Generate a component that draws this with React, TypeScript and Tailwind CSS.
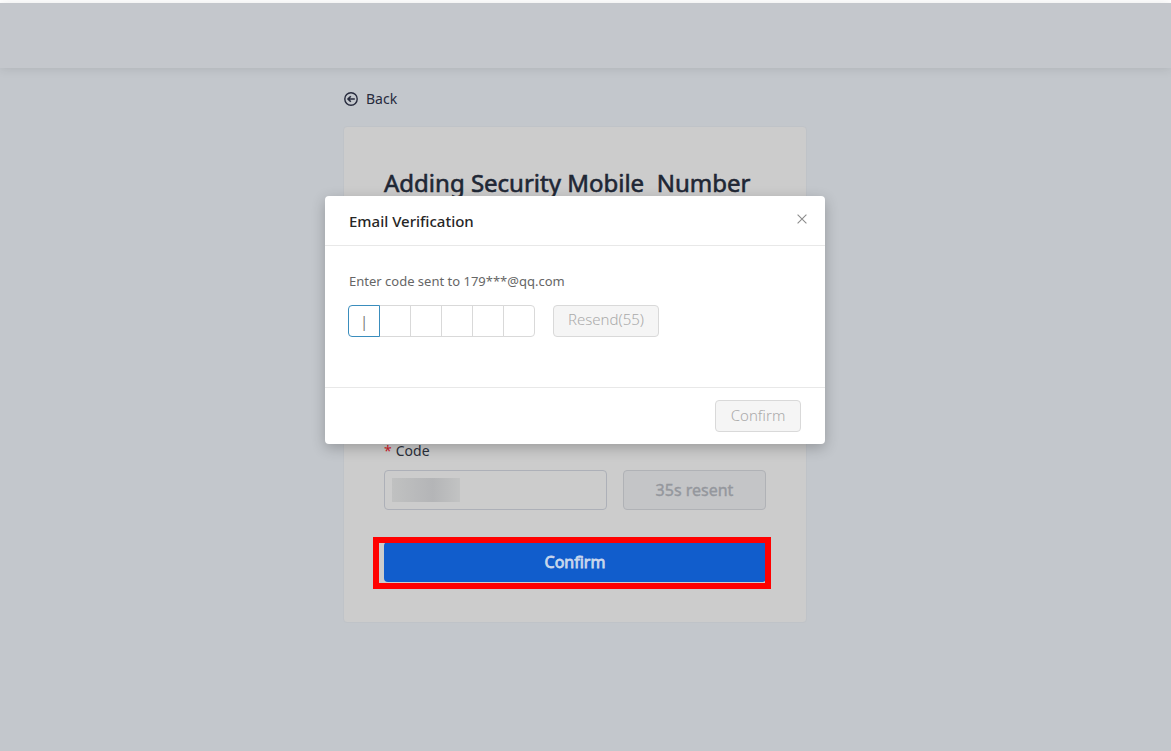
import React from "react";

const CELLS = ["1", "2", "3", "4", "5", "6"];

function BackIcon() {
  return (
    <svg width="14" height="14" viewBox="0 0 14 14" fill="none" stroke="currentColor" aria-hidden="true">
      <circle cx="7" cy="7" r="6.2" strokeWidth="1.4" />
      <path d="M10.8 7H4M6.8 4.2 4 7l2.8 2.8" strokeWidth="1.6" />
    </svg>
  );
}

function CloseIcon() {
  return (
    <svg width="10" height="10" viewBox="0 0 10 10" fill="none" stroke="currentColor" aria-hidden="true">
      <path d="M0.6 0.6l8.8 8.8M9.4 0.6L0.6 9.4" strokeWidth="1.1" />
    </svg>
  );
}

function SecurityCard() {
  return (
    <section className="rounded border border-[#bfc3c8] bg-[#cccccc] p-10">
      <h1 className="text-2xl leading-8 font-normal whitespace-pre text-[#1f2735] [-webkit-text-stroke:0.6px_currentColor]">
        Adding Security Mobile  Number
      </h1>
      <form className="pt-[242px]" onSubmit={(e) => e.preventDefault()}>
        <label htmlFor="sms-code" className="flex h-5 gap-1 text-sm leading-5 text-[#2b303b]">
          <span className="text-[#d32029]">*</span>
          Code
        </label>
        <div className="mt-[9px] flex gap-4">
          <div className="relative min-w-0 flex-1">
            <input
              id="sms-code"
              type="text"
              className="block h-10 w-full rounded border border-[#adb0b8] bg-transparent px-2 outline-none"
            />
            <div className="pointer-events-none absolute top-2 left-2 h-6 w-[68px] bg-linear-to-r from-[#c0c1c1] via-[#b4b5b7] via-60% to-[#c2c3c3]" />
          </div>
          <button
            type="button"
            disabled
            className="h-10 w-[143px] rounded border border-[#b0b2b6] bg-[#c4c5c7] text-base font-normal text-[#94979d] [-webkit-text-stroke:0.4px_currentColor]"
          >
            35s resent
          </button>
        </div>
        <div className="relative mt-8">
          <button
            type="submit"
            className="block h-10 w-full rounded bg-[#115dcc] text-base font-normal text-[#c9d7ec] [-webkit-text-stroke:0.8px_currentColor]"
          >
            Confirm
          </button>
          <div className="pointer-events-none absolute -top-[5px] -right-[5px] -bottom-[7px] -left-[11px] border-6 border-[#ff0000]" />
        </div>
      </form>
    </section>
  );
}

function VerificationDialog() {
  return (
    <div
      role="dialog"
      aria-labelledby="dialog-title"
      className="w-[500px] rounded-[4px] bg-white font-['Noto_Sans',sans-serif] shadow-[0_4px_14px_rgba(0,0,0,0.24)]"
    >
      <header className="flex h-[50px] items-center justify-between border-b border-[#e8e8e8] pr-[18px] pl-6">
        <h2 id="dialog-title" className="text-[15px] leading-6 font-medium text-[#262626]">
          Email Verification
        </h2>
        <button type="button" aria-label="Close" className="flex h-6 w-[10px] items-center justify-center pb-1 text-[#8c8c8c]">
          <CloseIcon />
        </button>
      </header>
      <div className="h-[141px] pt-[23px] pr-6 pl-[23px]">
        <p className="px-px font-['Noto_Sans',sans-serif] text-[13px] leading-6 font-normal text-[#666666]">
          Enter code sent to 179***@qq.com
        </p>
        <div className="mt-3 flex items-center gap-[18px]">
          <div className="flex -space-x-px">
            {CELLS.map((n, i) => (
              <input
                key={n}
                type="text"
                maxLength={1}
                aria-label={`Digit ${n}`}
                placeholder={i === 0 ? "|" : undefined}
                className="h-8 w-8 border border-[#d9d9d9] bg-white text-center text-sm outline-none placeholder:text-[#777777] first:relative first:rounded-l first:border-[#3a8dbd] last:rounded-r"
              />
            ))}
          </div>
          <button
            type="button"
            disabled
            className="h-8 w-[106px] rounded border border-[#d9d9d9] bg-[#f5f5f5] pb-1 text-[15px] font-light text-[#aaaaaa]"
          >
            Resend(55)
          </button>
        </div>
      </div>
      <footer className="flex h-[57px] items-center justify-end border-t border-[#e8e8e8] px-6">
        <button
          type="button"
          disabled
          className="h-8 w-[86px] rounded border border-[#d9d9d9] bg-[#f5f5f5] pb-0.5 text-[15px] font-light text-[#aaaaaa]"
        >
          Confirm
        </button>
      </footer>
    </div>
  );
}

export default function App() {
  return (
    <div className="relative flex min-h-screen flex-col bg-[#c3c7cc] font-['Noto_Sans',sans-serif]">
      <div className="h-[3px] bg-white" />
      <header className="h-[65px] bg-[#c4c7cc] shadow-[0_1px_10px_rgba(0,0,0,0.1)]" />
      <main className="flex-1 pt-[19px] pr-[21px]">
        <div className="mx-auto max-w-[464px]">
          <a href="#back" className="flex items-center gap-2 px-px text-sm leading-6 text-[#272b3d]">
            <BackIcon />
            <span className="font-normal">Back</span>
          </a>
          <div className="mt-[15px]">
            <SecurityCard />
          </div>
        </div>
      </main>
      <div className="absolute inset-0 flex items-start justify-center pt-49 pr-[21px]">
        <VerificationDialog />
      </div>
    </div>
  );
}
